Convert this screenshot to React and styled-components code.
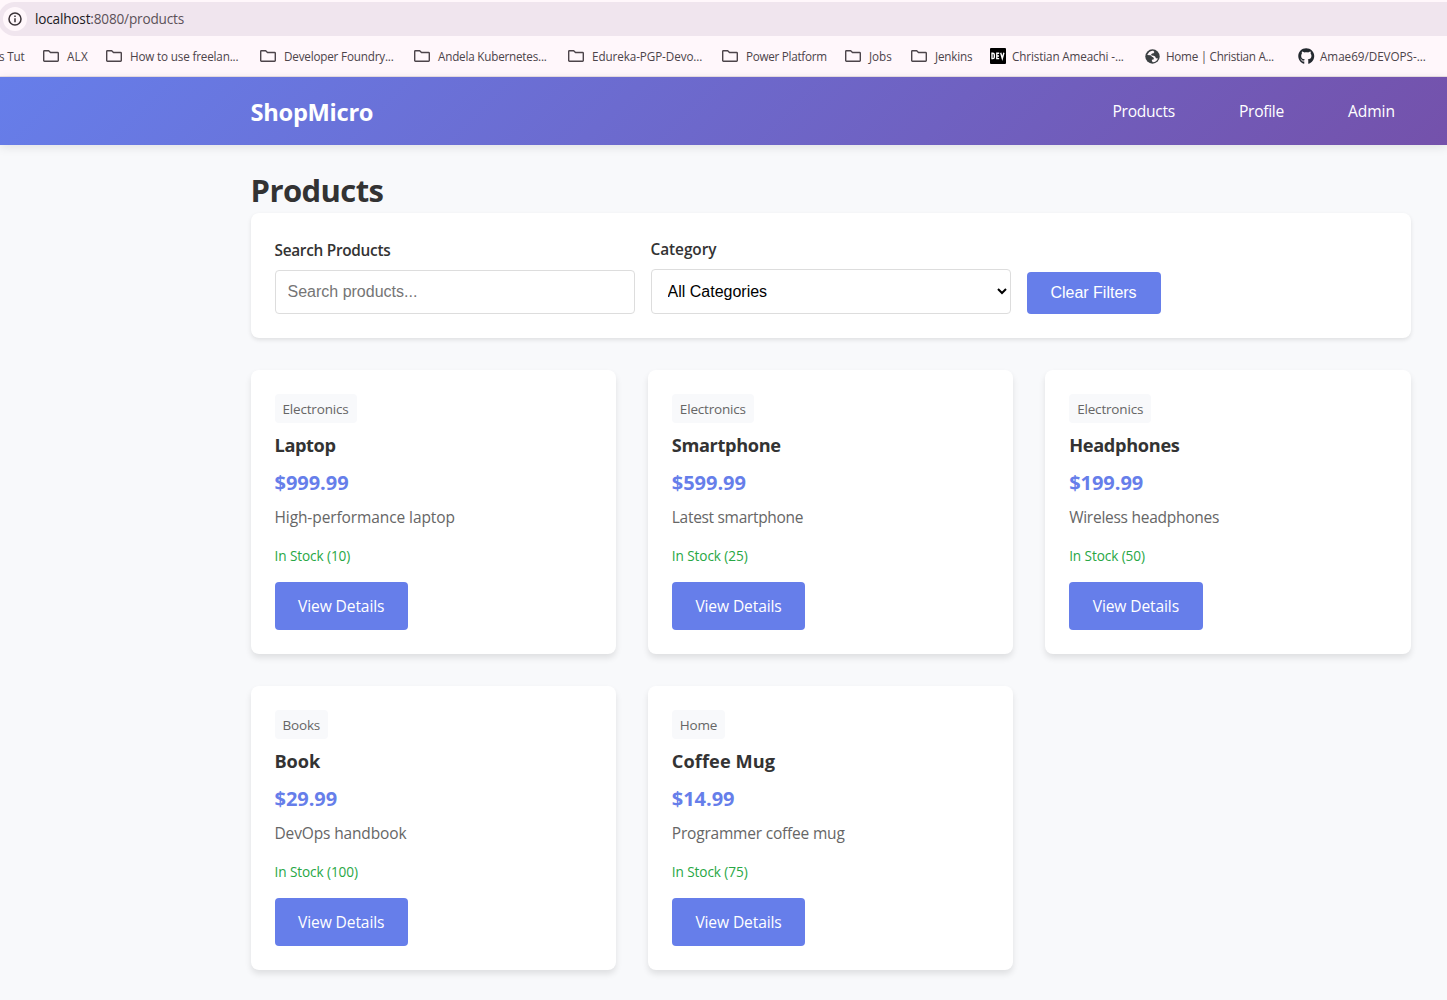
import React from "react";
import styled, { createGlobalStyle } from "styled-components";
import { FaGithub } from "react-icons/fa";

const GlobalStyle = createGlobalStyle`
  *, *::before, *::after { box-sizing: border-box; margin: 0; padding: 0; }
  html, body { height: 1000px; overflow: hidden; }
  body {
    font-family: "Open Sans", "Noto Sans", sans-serif;
    color: #333;
    background: #f8f9fb;
  }
`;

const Page = styled.div`
  width: 1447px;
  height: 1000px;
  overflow: hidden;
  background: #f8f9fb;
`;

const Chrome = styled.div`
  height: 77px;
  padding-top: 2px;
  background: #fff7fb;
  border-bottom: 1px solid #e9dfe5;
`;

const AddressBar = styled.div`
  display: flex;
  align-items: center;
  height: 34px;
  margin-left: -2px;
  padding-left: 5px;
  gap: 8px;
  border-radius: 17px 0 0 17px;
  background: #f0e5ee;
`;

const SiteInfo = styled.div`
  display: grid;
  place-items: center;
  width: 24px;
  height: 24px;
  border-radius: 50%;
  background: #fff7fb;
`;

const Url = styled.div`
  font-size: 13.6px;
  line-height: 20px;
  letter-spacing: -0.18px;
  color: #5c5159;
  span { color: #201a1e; }
`;

const Bookmarks = styled.div`
  display: flex;
  align-items: center;
  height: 40px;
  padding-left: 43px;
`;

const ClippedBookmark = styled.div`
  width: 43px;
  margin-left: -43px;
  padding-bottom: 1px;
  font-size: 11.7px;
  line-height: 16px;
  letter-spacing: -0.2px;
  color: #4c444a;
  white-space: nowrap;
  text-indent: -1px;
`;

const Bookmark = styled.div`
  flex: none;
  display: flex;
  align-items: center;
  gap: ${(p) => p.$gap}px;
  width: ${(p) => p.$width}px;
  color: #4c444a;
  svg { flex: none; display: block; }
`;

const BookmarkLabel = styled.span`
  padding-bottom: 1px;
  font-size: 11.7px;
  line-height: 16px;
  letter-spacing: ${(p) => p.$track}px;
  white-space: nowrap;
`;

const Header = styled.header`
  position: relative;
  display: flex;
  height: 68px;
  padding: 0 36px 0 250.5px;
  align-items: center;
  justify-content: space-between;
  background: linear-gradient(135deg, #667eea 0%, #764ba2 100%) 0 0 / 1662px 68px no-repeat;
  box-shadow: 0 2px 10px rgba(0, 0, 0, 0.1);
`;

const Brand = styled.div`
  padding-top: 2px;
  font-size: 23.7px;
  line-height: 38px;
  font-weight: 700;
  letter-spacing: -0.3px;
  color: #fff;
`;

const Nav = styled.nav`
  display: flex;
  gap: 32px;
`;

const NavLink = styled.a`
  padding: 8px 16px;
  font-size: 15.6px;
  line-height: 26px;
  letter-spacing: ${(p) => p.$track}px;
  color: #fff;
`;

const Main = styled.main`
  width: 1410.5px;
  padding: 20px 0 0 250.5px;
`;

const Title = styled.h1`
  height: 48px;
  font-size: 31px;
  line-height: 51px;
  font-weight: 700;
  letter-spacing: -0.58px;
`;

const Filters = styled.section`
  display: flex;
  align-items: flex-end;
  gap: 16px;
  height: 125px;
  padding: 24px;
  margin-bottom: 32px;
  border-radius: 8px;
  background: #fff;
  box-shadow: 0 2px 4px rgba(0, 0, 0, 0.1);
`;

const Field = styled.div`
  display: flex;
  flex-direction: column;
  width: 360px;
  gap: 6px;
`;

const Label = styled.label`
  font-size: 15.4px;
  line-height: 26px;
  font-weight: 600;
  letter-spacing: ${(p) => p.$track}px;
`;

const Input = styled.input`
  width: 100%;
  height: 44px;
  padding: 12px;
  border: 1px solid #ddd;
  border-radius: 4px;
  font: 16px "Liberation Sans", Arial, sans-serif;
  &::placeholder { color: #757575; }
`;

const Select = styled.select`
  width: 100%;
  height: 45px;
  padding: 12px;
  border: 1px solid #ddd;
  border-radius: 4px;
  background: #fff;
  color: #000;
  font: 16px "Liberation Sans", Arial, sans-serif;
`;

const ClearButton = styled.button`
  width: 134px;
  height: 42px;
  border: 0;
  border-radius: 4px;
  background: #667eea;
  color: #fff;
  font: 16px "Liberation Sans", Arial, sans-serif;
`;

const Grid = styled.section`
  display: grid;
  grid-template-columns: repeat(3, 1fr);
  gap: 32px;
`;

const Card = styled.article`
  display: flex;
  flex-direction: column;
  align-items: flex-start;
  height: 284px;
  padding: 24px;
  border-radius: 8px;
  background: #fff;
  box-shadow: 0 4px 6px rgba(0, 0, 0, 0.1);
`;

const Tag = styled.span`
  height: 29px;
  padding: 0 8px;
  margin-bottom: 7px;
  border-radius: 4px;
  background: #f8f9fb;
  font-size: 13.5px;
  line-height: 30px;
  letter-spacing: -0.18px;
  color: #666;
`;

const Name = styled.h3`
  margin-bottom: 6px;
  font-size: 18.2px;
  line-height: 30px;
  font-weight: 700;
  letter-spacing: ${(p) => p.$track}px;
`;

const Price = styled.div`
  margin-bottom: 4px;
  font-size: 20px;
  line-height: 34px;
  font-weight: 700;
  letter-spacing: -0.04px;
  color: #667eea;
`;

const Description = styled.p`
  margin-bottom: 14px;
  font-size: 15.5px;
  line-height: 26px;
  letter-spacing: ${(p) => p.$track}px;
  color: #666;
`;

const Stock = styled.div`
  margin-bottom: 15px;
  font-size: 13.6px;
  line-height: 23px;
  letter-spacing: -0.09px;
  color: #28a745;
`;

const DetailsButton = styled.a`
  width: 133.4px;
  height: 48px;
  border-radius: 4px;
  background: #667eea;
  color: #fff;
  font-size: 15.6px;
  line-height: 49px;
  letter-spacing: -0.12px;
  text-align: center;
`;

const InfoIcon = () => (
  <svg width="14" height="14" viewBox="0 0 14 14" fill="none" stroke="#3b3338" strokeWidth="1.5">
    <circle cx="7" cy="7" r="6" />
    <path d="M7 6.3v4M7 3.6v1.5" />
  </svg>
);

const FolderIcon = () => (
  <svg width="16" height="16" viewBox="0 0 16 16" fill="none" stroke="#4c444a" strokeWidth="1.4" strokeLinejoin="round">
    <path d="M.7 12.7V3.4q0-.7.7-.7h4.3l1.8 1.8h7.1q.7 0 .7.7v7.4q0 .7-.7.7H1.4q-.7 0-.7-.7z" />
  </svg>
);

const DevIcon = () => (
  <svg width="16" height="16" viewBox="0 0 16 16">
    <rect width="16" height="16" rx="1" fill="#000" />
    <g fill="none" stroke="#fff" strokeWidth="1.4">
      <path d="M2 5.3v5.3h.8q1.5 0 1.5-1.4V6.7q0-1.4-1.5-1.4z" />
      <path d="M9.2 5.3H6.8v5.3h2.4M6.8 8H9" />
      <path d="M10.7 4.7l1.6 5.7 1.6-5.7" />
    </g>
  </svg>
);

const GlobeIcon = () => (
  <svg width="15" height="15" viewBox="0 0 15 15">
    <circle cx="7.5" cy="7.5" r="7.2" fill="#3c4043" />
    <path d="M7.4 1.7Q3.8 2.3 2.2 6l3.3.2 1.8 1.9H8l.9 1.3-.4 1.1-1.6.3v1.3l.9 1.2q3.7-.2 5.2-3.8l-2-.3-.9-1.6-1.5-.9-2-.1-.5-1.3 1.1-.9 1.3-.1.9-1.4L8.3 1.7z" fill="#fff7fb" />
    <path d="M1.9 7.2l2 .5.6 1.3 1.2.6v1.8l-1 .7Q2.1 10.300 1.900 7.200z" fill="#3c4043" />
  </svg>
);

const icons = {
  folder: <FolderIcon />,
  dev: <DevIcon />,
  globe: <GlobeIcon />,
  github: <FaGithub size={16.5} color="#24292f" />,
};

const bookmarks = [
  { label: "ALX", icon: "folder", width: 63, track: 0.2 },
  { label: "How to use freelan...", icon: "folder", width: 154, track: -0.17 },
  { label: "Developer Foundry...", icon: "folder", width: 154, track: -0.19 },
  { label: "Andela Kubernetes...", icon: "folder", width: 154, track: -0.21 },
  { label: "Edureka-PGP-Devo...", icon: "folder", width: 154, track: -0.09 },
  { label: "Power Platform", icon: "folder", width: 123, track: -0.28 },
  { label: "Jobs", icon: "folder", width: 66, track: -0.05 },
  { label: "Jenkins", icon: "folder", width: 79, track: -0.2 },
  { label: "Christian Ameachi -...", icon: "dev", width: 154.5, gap: 6, track: -0.13 },
  { label: "Home | Christian A...", icon: "globe", width: 153.5, gap: 6.5, track: -0.28 },
  { label: "Amae69/DEVOPS-...", icon: "github", width: 149, gap: 5.5, track: -0.03 },
];

const products = [
  { name: "Laptop", track: -0.39, category: "Electronics", price: "$999.99", text: "High-performance laptop", textTrack: -0.1, stock: 10 },
  { name: "Smartphone", track: -0.36, category: "Electronics", price: "$599.99", text: "Latest smartphone", textTrack: -0.31, stock: 25 },
  { name: "Headphones", track: -0.32, category: "Electronics", price: "$199.99", text: "Wireless headphones", textTrack: -0.26, stock: 50 },
  { name: "Book", track: -0.1, category: "Books", price: "$29.99", text: "DevOps handbook", textTrack: -0.14, stock: 100 },
  { name: "Coffee Mug", track: 0.08, category: "Home", price: "$14.99", text: "Programmer coffee mug", textTrack: -0.2, stock: 75 },
];

export default function App() {
  return (
    <Page>
      <GlobalStyle />
      <Chrome>
        <AddressBar>
          <SiteInfo><InfoIcon /></SiteInfo>
          <Url><span>localhost</span>:8080/products</Url>
        </AddressBar>
        <Bookmarks>
          <ClippedBookmark>s Tut</ClippedBookmark>
          {bookmarks.map((b) => (
            <Bookmark key={b.label} $width={b.width} $gap={b.gap ?? 8}>
              {icons[b.icon]}
              <BookmarkLabel $track={b.track}>{b.label}</BookmarkLabel>
            </Bookmark>
          ))}
        </Bookmarks>
      </Chrome>
      <Header>
        <Brand>ShopMicro</Brand>
        <Nav>
          <NavLink $track={-0.28}>Products</NavLink>
          <NavLink $track={-0.3}>Profile</NavLink>
          <NavLink $track={-0.05}>Admin</NavLink>
        </Nav>
      </Header>
      <Main>
        <Title>Products</Title>
        <Filters>
          <Field>
            <Label $track={-0.3}>Search Products</Label>
            <Input placeholder="Search products..." />
          </Field>
          <Field>
            <Label $track={-0.06}>Category</Label>
            <Select defaultValue="all">
              <option value="all">All Categories</option>
            </Select>
          </Field>
          <ClearButton>Clear Filters</ClearButton>
        </Filters>
        <Grid>
          {products.map((p) => (
            <Card key={p.name}>
              <Tag>{p.category}</Tag>
              <Name $track={p.track}>{p.name}</Name>
              <Price>{p.price}</Price>
              <Description $track={p.textTrack}>{p.text}</Description>
              <Stock>{`In Stock (${p.stock})`}</Stock>
              <DetailsButton>View Details</DetailsButton>
            </Card>
          ))}
        </Grid>
      </Main>
    </Page>
  );
}
